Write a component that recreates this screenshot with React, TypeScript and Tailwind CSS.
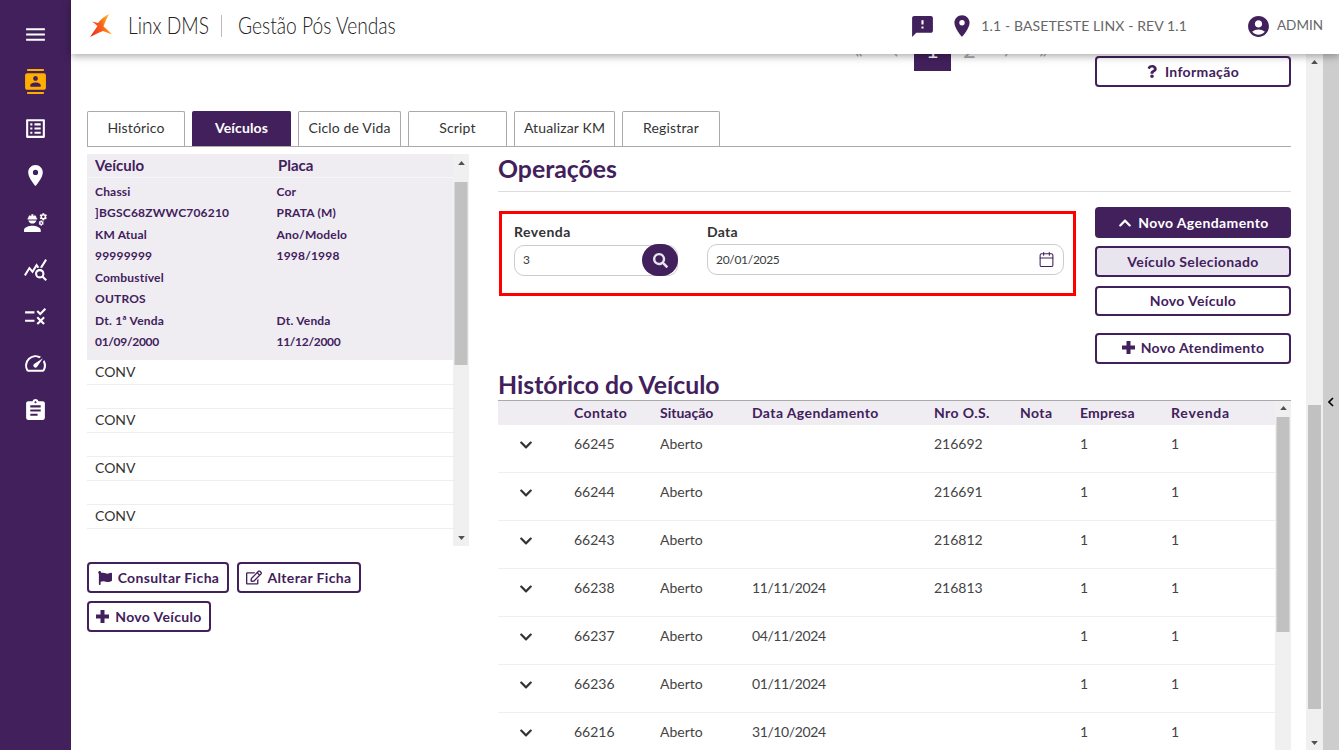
import { ReactNode } from "react";
import {
    FaChevronDown,
    FaChevronUp,
    FaFlag,
    FaQuestion,
    FaRegEdit,
    FaSearch,
} from "react-icons/fa";
import {
    MdAccountCircle,
    MdAssignment,
    MdContacts,
    MdEngineering,
    MdListAlt,
    MdLocationOn,
    MdMenu,
    MdQueryStats,
    MdRule,
    MdSmsFailed,
    MdSpeed,
} from "react-icons/md";
import { Calendar } from "lucide-react";

const tabs = [
    { label: "Histórico", width: "w-[98px]" },
    { label: "Veículos", width: "w-[99px]", active: true },
    { label: "Ciclo de Vida", width: "w-[103px]" },
    { label: "Script", width: "w-[99px]" },
    { label: "Atualizar KM", width: "w-[101px]" },
    { label: "Registrar", width: "w-[98px]" },
];

const pages = ["«", "‹", "1", "2", "›", "»"];

const vehicleFields = [
    ["Chassi", "Cor"],
    ["]BGSC68ZWWC706210", "PRATA (M)"],
    ["KM Atual", "Ano/Modelo"],
    ["99999999", "1998/1998"],
    ["Combustível", ""],
    ["OUTROS", ""],
    ["Dt. 1ª Venda", "Dt. Venda"],
    ["01/09/2000", "11/12/2000"],
];

const history = [
    { contato: "66245", data: "", os: "216692" },
    { contato: "66244", data: "", os: "216691" },
    { contato: "66243", data: "", os: "216812" },
    { contato: "66238", data: "11/11/2024", os: "216813" },
    { contato: "66237", data: "04/11/2024", os: "" },
    { contato: "66236", data: "01/11/2024", os: "" },
    { contato: "66216", data: "31/10/2024", os: "" },
];

function Arrow({ down }: { down?: boolean }) {
    return (
        <svg viewBox="0 0 10 6" className="w-[7px] h-[4px] fill-[#505050]">
            <path d={down ? "M0 0h10L5 6z" : "M0 6h10L5 0z"} />
        </svg>
    );
}

function PlusIcon() {
    return (
        <svg viewBox="0 0 13 13" className="w-[13px] h-[13px] mr-px fill-current">
            <path d="M4.5 0h4v4.5H13v4H8.5V13h-4V8.5H0v-4h4.5z" />
        </svg>
    );
}

function OutlineButton({ children, className }: { children: ReactNode; className: string }) {
    return (
        <button className={`flex items-center justify-center gap-[5px] border-2 border-[#42205c] rounded-[4px] text-[#42205c] text-[14px] font-bold tracking-[0.35px] ${className}`}>
            {children}
        </button>
    );
}

function Logo() {
    return (
        <svg viewBox="0 0 24 24" className="w-[24px] h-[24px] ml-[18px] mb-[2px]">
            <defs>
                <linearGradient id="lx" x1="0" y1="0.8" x2="1" y2="0.5">
                    <stop offset="0" stopColor="#f0281e" />
                    <stop offset="0.55" stopColor="#f9601c" />
                    <stop offset="1" stopColor="#ffc21a" />
                </linearGradient>
            </defs>
            <path
                d="M20 0C16 2 12 5 9 9L3 7.5C5 9 7 10.5 8.5 12L1 23C7 20 11 18 14 17C17 18 20 19.5 23 20.5C20 17 17 14.5 14.5 12.5C16 8 18 4 20 0Z"
                fill="url(#lx)"
            />
        </svg>
    );
}

export default function App() {
    return (
        <div className="flex h-screen w-screen overflow-hidden bg-white font-['Lato',sans-serif] text-[#3c3c3c]">
            <aside className="w-[71px] shrink-0 bg-[#42205c] flex flex-col items-center pt-[22px] gap-[22px] text-white">
                <MdMenu className="w-[25px] h-[25px]" />
                <MdContacts className="w-[25px] h-[25px] text-[#ffae00]" />
                <MdListAlt className="w-[25px] h-[25px]" />
                <MdLocationOn className="w-[25px] h-[25px]" />
                <MdEngineering className="w-[25px] h-[25px]" />
                <MdQueryStats className="w-[25px] h-[25px]" />
                <MdRule className="w-[25px] h-[25px]" />
                <MdSpeed className="w-[25px] h-[25px]" />
                <MdAssignment className="w-[25px] h-[25px]" />
            </aside>

            <div className="flex-1 min-w-0 flex flex-col">
                <header className="relative z-10 h-[54px] shrink-0 bg-white flex items-center shadow-[0_2px_8px_rgba(0,0,0,0.35)]">
                    <Logo />
                    <span className="ml-[15px] mb-[4px] w-[78px] whitespace-nowrap origin-left scale-x-[0.8] text-[24px] font-light text-[#222]">Linx DMS</span>
                    <span className="ml-[15px] mb-[2px] w-px h-[22px] bg-[#bbb]"></span>
                    <span className="ml-[16px] mb-[4px] w-[159px] whitespace-nowrap origin-left scale-x-[0.8] text-[24px] font-light text-[#222]">Gestão Pós Vendas</span>
                    <MdSmsFailed className="ml-auto mb-[2px] w-[25px] h-[25px] text-[#42205c]" />
                    <MdLocationOn className="ml-[14px] mb-[2px] w-[26px] h-[26px] text-[#42205c]" />
                    <span className="ml-[6px] mb-[3px] text-[14px] tracking-[0.12px] text-[#666]">1.1 - BASETESTE LINX - REV 1.1</span>
                    <MdAccountCircle className="ml-[59px] mb-[2px] w-[25px] h-[25px] text-[#42205c]" />
                    <span className="ml-[6px] mr-[16px] mb-[3px] text-[13.5px] text-[#666]">ADMIN</span>
                </header>

                <div className="flex-1 min-h-0 flex">
                    <main className="flex-1 min-w-0 pl-[16px] pr-[15px] overflow-hidden">
                        <div className="h-[33px] flex overflow-hidden">
                            <div className="ml-[753px] flex items-start text-[#aaa]">
                                {pages.map((page) => (
                                    <div
                                        key={page}
                                        className={`w-[37px] h-[17px] text-center text-[22px] ${page === "1" ? "bg-[#42205c] text-white" : ""}`}
                                    >
                                        <span className="block -mt-[4px] leading-[0px]">{page}</span>
                                    </div>
                                ))}
                            </div>
                            <OutlineButton className="ml-auto mt-[2px] w-[196px] h-[31px]">
                                <FaQuestion className="w-[10px] h-[13px] mr-[3px]" /> Informação
                            </OutlineButton>
                        </div>

                        <div className="mt-[24px] flex gap-[7px] border-b border-[#aaa] h-[36px]">
                            {tabs.map((tab) => (
                                <div
                                    key={tab.label}
                                    className={`${tab.width} h-[35px] pb-[3px] flex items-center justify-center border border-b-0 rounded-t-[2px] text-[14px] tracking-[0.15px] ${
                                        tab.active ? "bg-[#42205c] border-[#42205c] text-white font-bold" : "bg-white border-[#aaa] text-[#333]"
                                    }`}
                                >
                                    {tab.label}
                                </div>
                            ))}
                        </div>

                        <div className="flex mt-[7px]">
                            <section className="w-[382px] shrink-0">
                                <div className="flex h-[392px]">
                                    <div className="w-[366px] text-[13px]">
                                        <div className="bg-[#efedf2] text-[#42205c] font-bold">
                                            <div className="h-[24px] flex items-center text-[15px] border-b border-[#f6f5f8]">
                                                <span className="pl-[8px] w-[191px]">Veículo</span>
                                                <span>Placa</span>
                                            </div>
                                            <div className="h-[182px] pt-[3px]">
                                                {vehicleFields.map(([a, b]) => (
                                                    <div
                                                        key={a}
                                                        className={`h-[21.5px] flex items-center text-[12px] ${a.includes("/") ? "tracking-[-0.3px]" : "tracking-[0.2px]"}`}
                                                    >
                                                        <span className="pl-[8px] w-[189.5px]">{a}</span>
                                                        <span>{b}</span>
                                                    </div>
                                                ))}
                                            </div>
                                        </div>
                                        <div className="mt-px">
                                            {[0, 1, 2, 3, 4, 5, 6].map((i) => (
                                                <div key={i} className="h-[24px] pl-[8px] pb-[2px] flex items-center text-[14px] text-[#333] border-b border-[#eee]">
                                                    {i % 2 === 0 ? "CONV" : ""}
                                                </div>
                                            ))}
                                        </div>
                                    </div>
                                    <div className="w-[16px] bg-[#f0f0f0] flex flex-col items-center">
                                        <div className="h-[28px] pt-[7px] shrink-0"><Arrow /></div>
                                        <div className="w-[13px] h-[183px] -translate-x-[0.5px] bg-[#c1c1c1]"></div>
                                        <div className="mt-auto pb-[6px]"><Arrow down /></div>
                                    </div>
                                </div>
                                <div className="mt-[16px] flex gap-[8px]">
                                    <OutlineButton className="w-[142px] h-[31px]">
                                        <FaFlag className="w-[16px] h-[14px]" /> Consultar Ficha
                                    </OutlineButton>
                                    <OutlineButton className="w-[124px] h-[31px]">
                                        <FaRegEdit className="w-[16px] h-[15px]" /> Alterar Ficha
                                    </OutlineButton>
                                </div>
                                <OutlineButton className="mt-[8px] w-[124px] h-[31px]">
                                    <PlusIcon /> Novo Veículo
                                </OutlineButton>
                            </section>

                            <section className="ml-[29px] flex-1 min-w-0">
                                <h2 className="h-[38px] border-b border-[#ddd] text-[24.8px] leading-[30px] font-bold text-[#42205c]">Operações</h2>
                                <div className="flex mt-[15px]">
                                    <div className="w-[577px] h-[85px] ml-px mt-[4px] border-[3px] border-[#ff0000] flex gap-[29px] pl-[12px] pr-[9px] pt-[7px] text-[14px]">
                                        <div className="w-[164px]">
                                            <label className="block h-[23px] font-bold text-[#333] tracking-[0.5px]">Revenda</label>
                                            <div className="flex items-center">
                                                <div className="flex-1 h-[31px] border border-[#ccc] rounded-[10px] pl-[8px] flex items-center text-[12px] -mr-[36px]">3</div>
                                                <button className="relative w-[36px] h-[32px] rounded-full bg-[#42205c] flex items-center justify-center text-[#e8e4ec]">
                                                    <FaSearch className="w-[15px] h-[15px]" />
                                                </button>
                                            </div>
                                        </div>
                                        <div className="flex-1">
                                            <label className="block h-[23px] font-bold text-[#333] tracking-[0.3px]">Data</label>
                                            <div className="h-[31px] border border-[#ccc] rounded-[10px] pl-[8px] pr-[8px] flex items-center justify-between text-[12px] tracking-[-0.3px]">
                                                20/01/2025
                                                <Calendar className="w-[17px] h-[17px] text-[#42205c]" strokeWidth={1.5} />
                                            </div>
                                        </div>
                                    </div>
                                    <div className="ml-[19px] w-[196px] flex flex-col">
                                        <button className="h-[31px] bg-[#42205c] rounded-[4px] text-white text-[14px] font-bold tracking-[0.4px] flex items-center justify-center gap-[5px]">
                                            <FaChevronUp className="w-[16px] h-[14px]" /> Novo Agendamento
                                        </button>
                                        <OutlineButton className="mt-[8px] h-[31px] bg-[#e9e5ee]">Veículo Selecionado</OutlineButton>
                                        <OutlineButton className="mt-[9px] h-[30px] pb-[2px]">Novo Veículo</OutlineButton>
                                        <OutlineButton className="mt-[17px] h-[31px] pb-[2px]">
                                            <PlusIcon /> Novo Atendimento
                                        </OutlineButton>
                                    </div>
                                </div>

                                <h2 className="mt-[8px] h-[28px] text-[24.8px] leading-[26px] font-bold text-[#42205c]">Histórico do Veículo</h2>
                                <div className="flex border-t border-[#aaa]">
                                    <div className="flex-1 min-w-0">
                                        <div className="h-[24px] pb-px bg-[#efedf2] grid grid-cols-[76px_86px_92px_182px_86px_60px_91px_1fr] items-center text-[14px] font-bold tracking-[0.4px] text-[#42205c]">
                                            <span></span>
                                            <span>Contato</span>
                                            <span className="tracking-normal">Situação</span>
                                            <span>Data Agendamento</span>
                                            <span>Nro O.S.</span>
                                            <span>Nota</span>
                                            <span className="tracking-[0.2px]">Empresa</span>
                                            <span className="tracking-[0.8px]">Revenda</span>
                                        </div>
                                        {history.map((row) => (
                                            <div key={row.contato} className="h-[48px] pt-[11px] border-b border-[#eee] grid grid-cols-[76px_86px_92px_182px_86px_60px_91px_1fr] text-[14px] text-[#444] leading-[16px]">
                                                <span className="pl-[21px] pt-[2px] text-[#333]"><FaChevronDown className="w-[14px] h-[14px]" /></span>
                                                <span>{row.contato}</span>
                                                <span>Aberto</span>
                                                <span className="tracking-[-0.4px]">{row.data}</span>
                                                <span>{row.os}</span>
                                                <span></span>
                                                <span>1</span>
                                                <span>1</span>
                                            </div>
                                        ))}
                                    </div>
                                    <div className="w-[16px] shrink-0 h-[360px] bg-[#f0f0f0] flex flex-col items-center">
                                        <div className="h-[16px] pt-[5px] shrink-0"><Arrow /></div>
                                        <div className="w-[13px] h-[215px] -translate-x-[0.5px] bg-[#c1c1c1]"></div>
                                    </div>
                                </div>
                            </section>
                        </div>
                    </main>

                    <div className="w-[17px] shrink-0 bg-[#f0f0f0] flex flex-col items-center">
                        <div className="h-[351px] pt-[6px] shrink-0"><Arrow /></div>
                        <div className="w-[13px] h-[304px] bg-[#c1c1c1]"></div>
                        <div className="mt-auto pb-[5px]"><Arrow down /></div>
                    </div>
                    <div className="w-[16px] shrink-0 bg-[#cdcdcd] flex flex-col items-center pt-[343px]">
                        <svg viewBox="0 0 6 10" className="w-[6px] h-[10px] fill-none stroke-black stroke-[1.6]">
                            <path d="M5 1 1 5l4 4" />
                        </svg>
                    </div>
                </div>
            </div>
        </div>
    );
}
